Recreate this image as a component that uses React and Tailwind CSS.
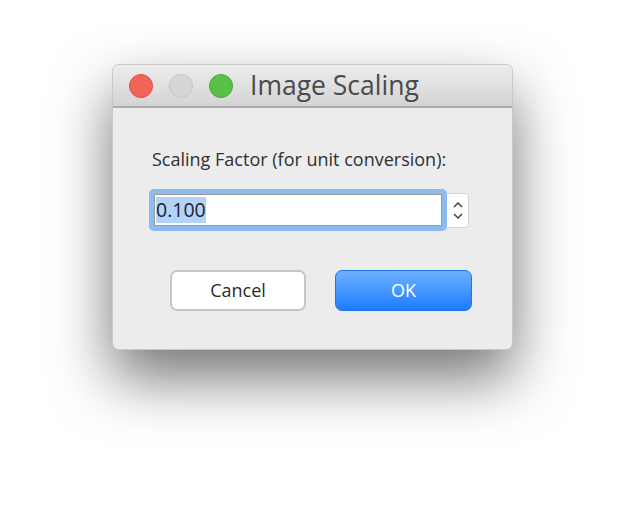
export default function App() {
  return (
    <div className="w-[624px] h-[510px] bg-white pt-[64px] pl-[112px] font-['Open_Sans',sans-serif]">
      <div className="w-[401px] h-[286px] rounded-[7px] bg-[#ececec] border border-[#c8c8c8] shadow-[0_28px_60px_rgba(0,0,0,0.55)] overflow-hidden flex flex-col">
        <div className="h-[43px] flex items-center pl-[16px] bg-gradient-to-b from-[#ececec] to-[#d4d4d4] border-b-2 border-[#ababab]">
          <div className="flex gap-[16px]">
            <span className="w-[24px] h-[24px] rounded-full bg-[#f0655a] border border-[#e0493f]"></span>
            <span className="w-[24px] h-[24px] rounded-full bg-[#d6d6d6] border border-[#c6c6c6]"></span>
            <span className="w-[24px] h-[24px] rounded-full bg-[#5ac048] border border-[#45a836]"></span>
          </div>
          <span className="ml-[17px] text-[26.5px] text-[#4a4a4a] leading-none">Image Scaling</span>
        </div>
        <div className="flex flex-col pl-[39px] pt-[42px]">
          <div className="text-[18px] text-[#303030] leading-none">Scaling Factor (for unit conversion):</div>
          <div className="flex items-center mt-[21px] ml-[-3px]">
            <div className="w-[298px] h-[42px] rounded-[5px] bg-[#8dbbf0] p-[5px]">
              <div className="w-full h-full bg-white border border-[#9a9a9a] flex items-center">
                <span className="text-[19.5px] text-[#222] bg-[#b3d3fa] leading-[26px] ml-[1px]">0.100</span>
              </div>
            </div>
            <div className="w-[22px] h-[35px] bg-white rounded-r-[4px] border border-[#d4d4d4] border-l-0 flex flex-col items-center justify-center gap-[5px]">
              <svg width="10" height="6" viewBox="0 0 10 6"><path d="M1 5 L5 1 L9 5" fill="none" stroke="#444" strokeWidth="1.5" /></svg>
              <svg width="10" height="6" viewBox="0 0 10 6"><path d="M1 1 L5 5 L9 1" fill="none" stroke="#444" strokeWidth="1.5" /></svg>
            </div>
          </div>
          <div className="flex gap-[29px] mt-[39px] ml-[18px]">
            <button className="w-[136px] h-[41px] rounded-[7px] bg-white border-2 border-[#c6c6c6] text-[18px] text-[#2a2a2a]">Cancel</button>
            <button className="w-[137px] h-[41px] rounded-[7px] bg-gradient-to-b from-[#6cb1ff] to-[#187bff] border border-[#1f74ee] text-[18px] text-white">OK</button>
          </div>
        </div>
      </div>
    </div>
  )
}
